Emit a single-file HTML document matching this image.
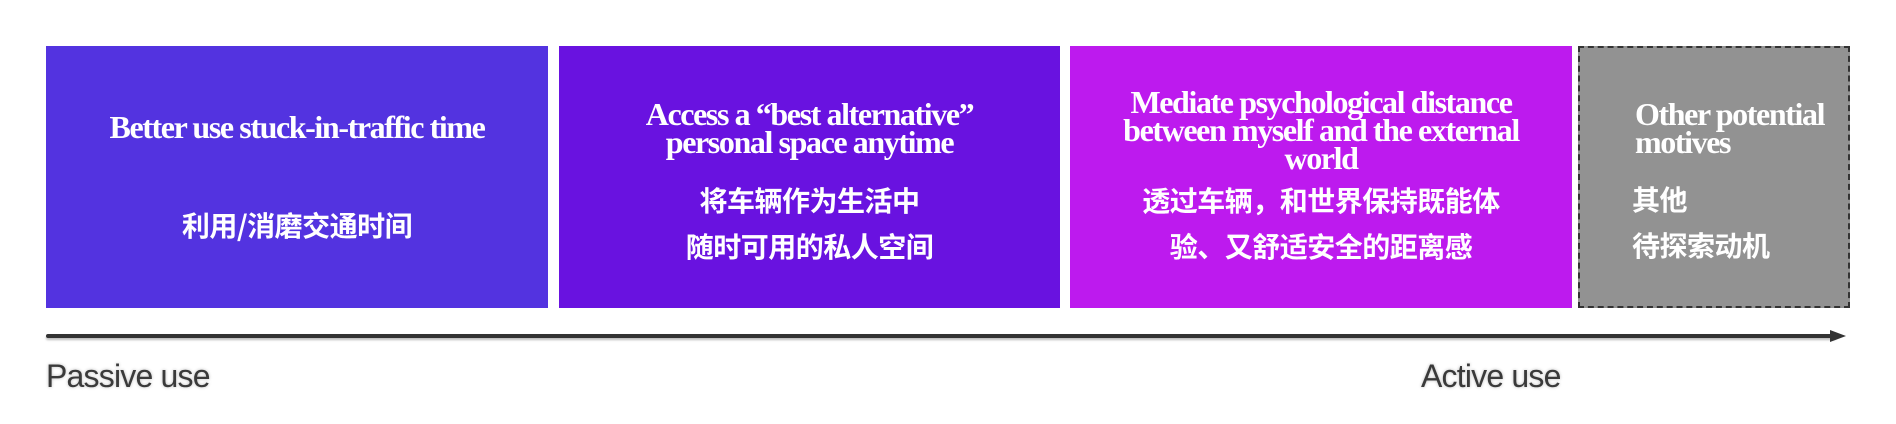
<!DOCTYPE html>
<html><head><meta charset="utf-8"><style>
body{margin:0;width:1896px;height:424px;background:#fff;position:relative;overflow:hidden;font-family:"Liberation Serif","Noto Serif CJK SC",serif}
.b{position:absolute;top:46px;height:262px;color:#fff}
.h{position:absolute;left:0;right:0;text-align:center;font-weight:bold;font-size:32px;line-height:28px;letter-spacing:-1.4px;white-space:nowrap}
.c{position:absolute;left:0;right:0;text-align:center;font-family:"Noto Sans CJK SC",sans-serif;font-weight:bold;font-size:28px;line-height:46px;letter-spacing:-0.5px}
.lbl{position:absolute;top:358px;font-family:"Liberation Sans",sans-serif;font-size:32px;color:#3a3a3a;text-shadow:0 0 3px #bbb;letter-spacing:-0.8px}
</style></head><body>
<div class="b" style="left:46px;width:502px;background:#5333e0">
<div class="h" style="top:67px">Better use stuck-in-traffic time</div>
<div class="c" style="top:156px">利用/消磨交通时间</div></div>
<div class="b" style="left:559px;width:501px;background:#6912e0">
<div class="h" style="top:54px">Access a “best alternative”<br>personal space anytime</div>
<div class="c" style="top:131px">将车辆作为生活中<br>随时可用的私人空间</div></div>
<div class="b" style="left:1070px;width:502px;background:#bd1aee">
<div class="h" style="top:42px">Mediate psychological distance<br>between myself and the external<br>world</div>
<div class="c" style="top:131px">透过车辆，和世界保持既能体<br>验、又舒适安全的距离感</div></div>
<div class="b" style="left:1578px;width:268px;height:258px;background:#929292;border:2px dashed #333">
<div class="h" style="top:52px;left:55px;text-align:left">Other potential<br>motives</div>
<div class="c" style="top:128px;left:52px;text-align:left">其他<br>待探索动机</div></div>
<div style="position:absolute;left:46px;top:334px;width:1790px;height:4px;background:#333;border-radius:2px;box-shadow:0 2px 2px #bbb"></div>
<svg style="position:absolute;left:1830px;top:328px" width="18" height="16"><path d="M0 2 L16 8 L0 14 Z" fill="#333"/></svg>
<div class="lbl" style="left:46px">Passive use</div>
<div class="lbl" style="left:1421px">Active use</div>
</body></html>
